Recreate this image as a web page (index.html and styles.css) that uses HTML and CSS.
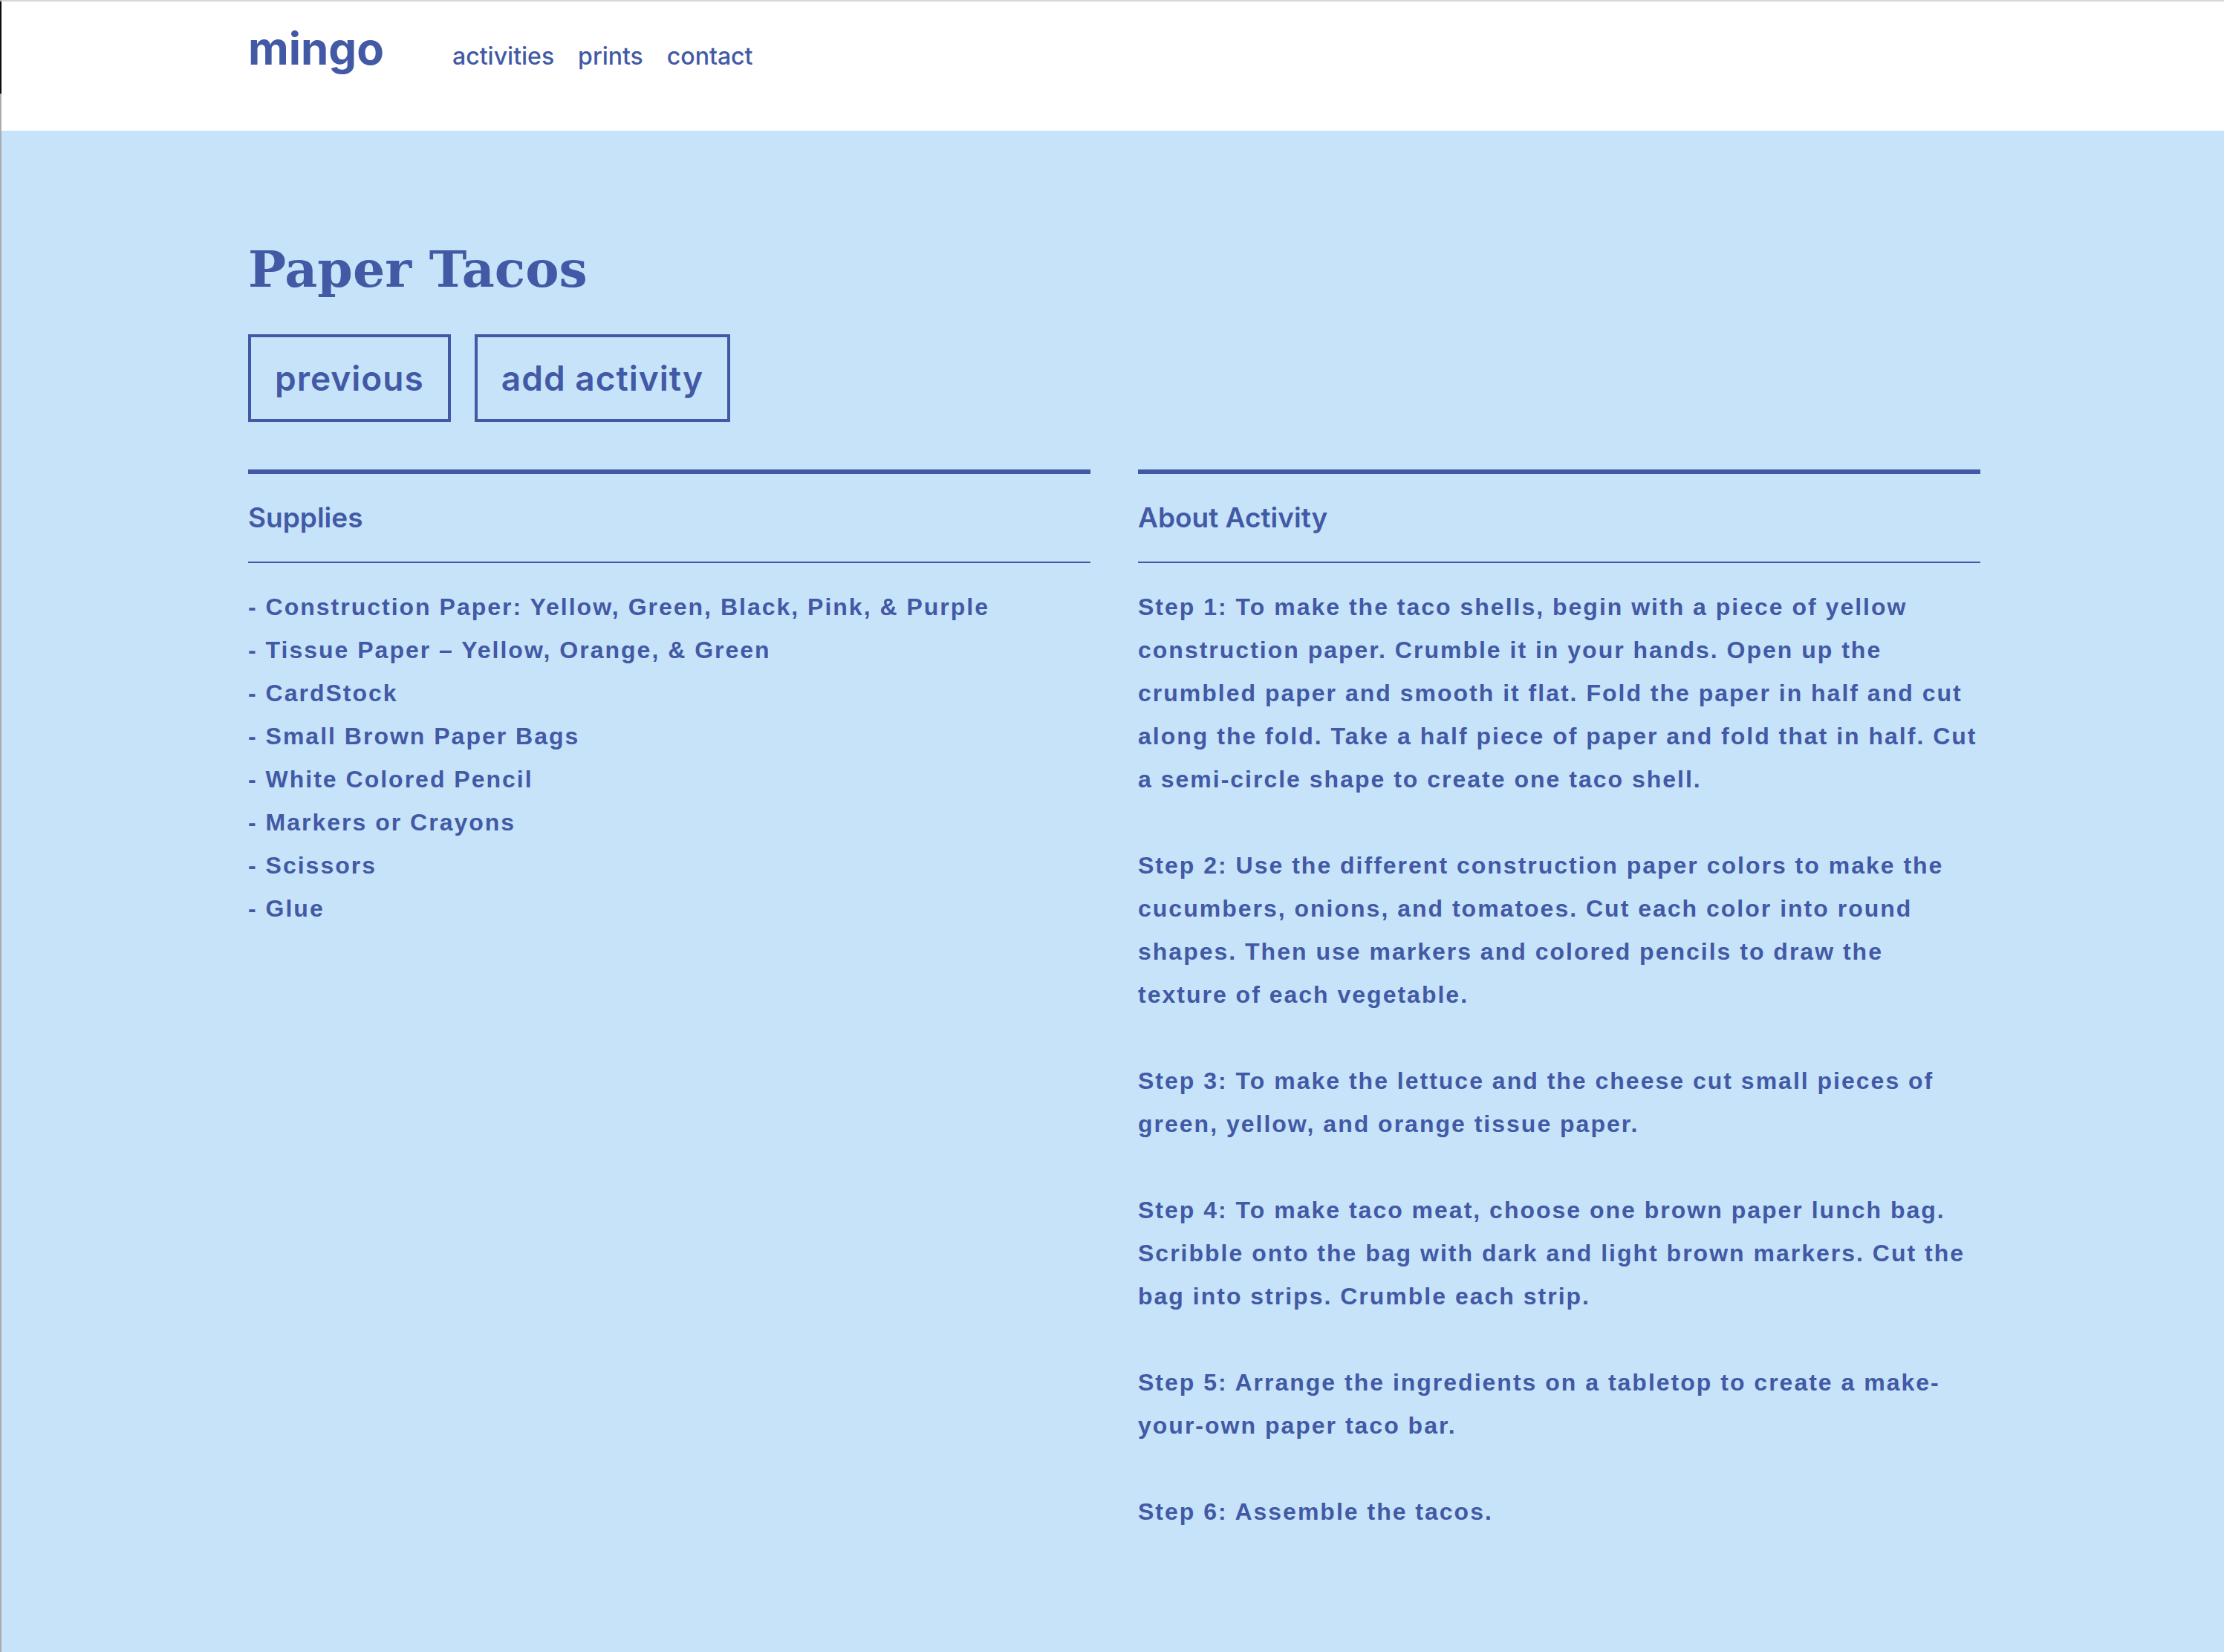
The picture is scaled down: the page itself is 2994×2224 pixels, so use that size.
FILE: index.html
```html
<!DOCTYPE html>
<html lang="en">
<head>
  <meta charset="utf-8">
  <title>Paper Tacos – mingo</title>
  <link rel="stylesheet" href="styles.css">
</head>
<body>
  <header class="site-header">
    <div class="container site-header-inner">
      <a class="logo" href="#">mingo</a>
      <nav class="site-nav">
        <a href="#">activities</a>
        <a href="#">prints</a>
        <a href="#">contact</a>
      </nav>
    </div>
  </header>
  <main class="activity">
    <div class="container">
      <h1 class="title">Paper Tacos</h1>
      <div class="actions">
        <button class="button" type="button">previous</button>
        <button class="button" type="button">add activity</button>
      </div>
      <div class="columns">
        <section>
          <h2 class="column-title">Supplies</h2>
          <ul class="supplies">
            <li>- Construction Paper: Yellow, Green, Black, Pink, &amp; Purple</li>
            <li>- Tissue Paper – Yellow, Orange, &amp; Green</li>
            <li>- CardStock</li>
            <li>- Small Brown Paper Bags</li>
            <li>- White Colored Pencil</li>
            <li>- Markers or Crayons</li>
            <li>- Scissors</li>
            <li>- Glue</li>
          </ul>
        </section>
        <section>
          <h2 class="column-title">About Activity</h2>
          <div class="steps">
            <p>Step 1: To make the taco shells, begin with a piece of yellow construction paper. Crumble it in your hands. Open up the crumbled paper and smooth it flat. Fold the paper in half and cut along the fold. Take a half piece of paper and fold that in half. Cut a semi-circle shape to create one taco shell.</p>
            <p>Step 2: Use the different construction paper colors to make the cucumbers, onions, and tomatoes. Cut each color into round shapes. Then use markers and colored pencils to draw the texture of each vegetable.</p>
            <p>Step 3: To make the lettuce and the cheese cut small pieces of green, yellow, and orange tissue paper.</p>
            <p>Step 4: To make taco meat, choose one brown paper lunch bag. Scribble onto the bag with dark and light brown markers. Cut the bag into strips. Crumble each strip.</p>
            <p>Step 5: Arrange the ingredients on a tabletop to create a make-your-own paper taco bar.</p>
            <p>Step 6: Assemble the tacos.</p>
          </div>
        </section>
      </div>
    </div>
  </main>
</body>
</html>
```

FILE: styles.css
```css
:root {
  --ink: #4259a5;
  --sky: #c7e3f9;
}

* {
  box-sizing: border-box;
  margin: 0;
  padding: 0;
}

/* the left edge is dark beside the header and grey below it */
body {
  display: flex;
  flex-direction: column;
  min-height: 100vh;
  padding-left: 2px;
  background:
    linear-gradient(#0c0c0e, #0c0c0e) 0 2px / 2px 124px no-repeat,
    linear-gradient(#a9abad, #a9abad) 0 0 / 2px 100% no-repeat,
    #fff;
  color: var(--ink);
  font-family: Inter, "Liberation Sans", sans-serif;
}

.container {
  width: 100%;
  max-width: 2336px;
  margin: 0 auto;
  padding-left: 4px;
}

.site-header {
  height: 176px;
  border-top: 2px solid #d6d6d6;
}

.site-header-inner {
  display: flex;
  align-items: baseline;
  gap: 92px;
  padding-top: 23px;
}

.logo {
  color: inherit;
  font-size: 60px;
  font-weight: 700;
  line-height: 80px;
  text-decoration: none;
}

.site-nav {
  display: flex;
  gap: 32px;
}

.site-nav a {
  color: inherit;
  font-size: 32px;
  font-weight: 500;
  text-decoration: none;
}

.activity {
  flex: 1;
  padding: 146px 0;
  background: var(--sky);
}

.title {
  margin-bottom: 48px;
  font-family: "DejaVu Serif", serif;
  font-size: 68px;
  line-height: 80px;
}

.actions {
  display: flex;
  gap: 32px;
}

.button {
  padding: 24px 32px;
  border: 4px solid var(--ink);
  background: transparent;
  color: inherit;
  font: 600 46px/62px Inter, sans-serif;
  letter-spacing: 1px;
}

.columns {
  display: grid;
  grid-template-columns: 1fr 1fr;
  gap: 64px;
  margin-top: 64px;
}

.column-title {
  margin-bottom: 30px;
  border-top: 6px solid var(--ink);
  border-bottom: 2px solid var(--ink);
  font-size: 37px;
  font-weight: 600;
  line-height: 118px;
}

.supplies,
.steps {
  font: 700 32px/58px "Liberation Sans", Arial, sans-serif;
  letter-spacing: 2px;
}

.supplies {
  list-style: none;
}

.steps {
  display: grid;
  gap: 58px;
}
```
